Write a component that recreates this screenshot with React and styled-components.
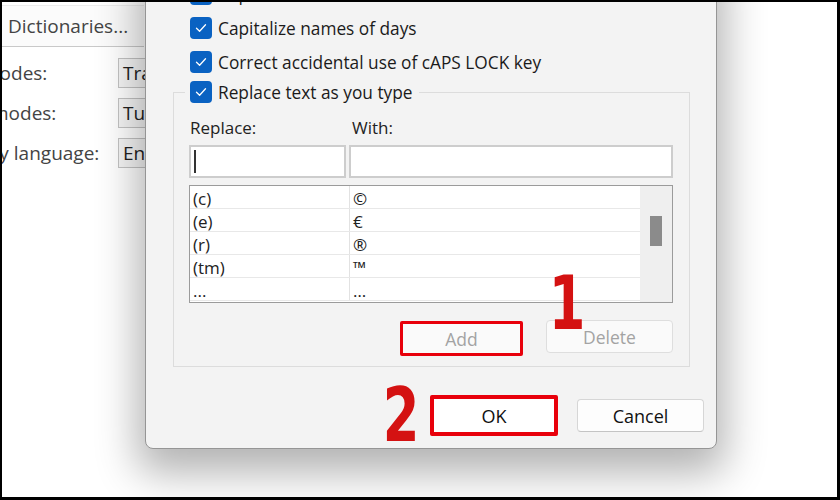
import React from 'react';
import styled, { createGlobalStyle } from 'styled-components';

const GlobalStyle = createGlobalStyle`
  html, body {
    margin: 0;
    padding: 0;
    background: #fff;
  }
  body {
    width: 840px;
    height: 500px;
    overflow: hidden;
    font-family: "Open Sans", "Noto Sans", sans-serif;
    color: #1b1b1b;
  }
  * {
    box-sizing: border-box;
  }
`;

const Screen = styled.div`
  position: relative;
  width: 840px;
  height: 500px;
  overflow: hidden;
  background: #fff;

  &::after {
    content: '';
    position: absolute;
    inset: 0;
    border-style: solid;
    border-color: #000;
    border-width: 2px 3px 3px 2px;
    pointer-events: none;
  }
`;

/* window behind the dialog */
const BackWindow = styled.div`
  padding-top: 5px;
  color: #3a3a3a;
`;

const DictButton = styled.div`
  width: 144px;
  height: 42px;
  display: flex;
  align-items: center;
  padding-left: 8px;
  background: #fbfbfb;
  border-top: 1px solid #ececec;
  border-bottom: 1px solid #c9c9c9;
  font-size: 19px;
  color: #444;
`;

const OptionRows = styled.div`
  display: flex;
  flex-direction: column;
  gap: 10px;
  margin-top: 11px;
`;

const OptionRow = styled.div`
  display: flex;
  align-items: center;
  height: 30px;
`;

const OptionLabel = styled.div`
  flex: 0 0 118px;
  white-space: nowrap;
  text-indent: ${(p) => p.$shift}px;
  font-size: 19px;
  color: #444;
`;

const SelectBox = styled.div`
  width: 70px;
  height: 30px;
  display: flex;
  align-items: center;
  padding-left: 4px;
  background: #f6f6f6;
  border: 1px solid #c4c4c4;
  font-size: 19px;
  color: #222;
  white-space: nowrap;
  overflow: hidden;
`;

/* AutoCorrect dialog */
const Dialog = styled.div`
  position: absolute;
  left: 145px;
  top: -40px;
  width: 572px;
  padding-top: 16px;
  background: #f3f3f3;
  border: 1px solid #959595;
  border-radius: 0 0 8px 8px;
  box-shadow: 0 16px 42px 8px rgba(0, 0, 0, 0.3);
`;

const CheckRow = styled.div`
  display: flex;
  align-items: center;
  gap: 6px;
  height: 34px;
  padding-left: 44px;
  font-size: 17.3px;
  white-space: nowrap;
`;

const Box = styled.span`
  flex: 0 0 22px;
  width: 22px;
  height: 22px;
  border-radius: 4px;
  background: #0a62c2;
  display: flex;
  align-items: center;
  justify-content: center;
`;

const Group = styled.fieldset`
  margin: 0 26px 0 27px;
  padding: 0 16px 10px 15px;
  border: 1px solid #dcdcdc;
  min-width: 0;
`;

const Legend = styled.legend`
  display: flex;
  align-items: center;
  gap: 6px;
  height: 26px;
  margin-left: -4px;
  padding: 0 6px 0 5px;
  font-size: 17.3px;
  white-space: nowrap;
`;

const FieldGrid = styled.div`
  display: grid;
  grid-template-columns: 157px 324px;
  column-gap: 3px;
  row-gap: 5px;
  margin-top: 11px;
`;

const FieldLabel = styled.div`
  height: 24px;
  line-height: 24px;
  padding-left: ${(p) => (p.$second ? 3 : 1)}px;
  font-size: 17px;
  color: #222;
`;

const TextBox = styled.div`
  height: 33px;
  background: #fff;
  border: 2px solid #cdcdcd;
  display: flex;
  align-items: center;
  padding-left: 3px;
`;

const Caret = styled.span`
  width: 2px;
  height: 23px;
  background: #333;
`;

const List = styled.div`
  display: flex;
  height: 118px;
  margin-top: 7px;
  border: 1px solid #9b9b9b;
  background: #fff;
  overflow: hidden;
`;

const Rows = styled.div`
  flex: 1;
`;

const Row = styled.div`
  display: grid;
  grid-template-columns: 160px 1fr;
  height: 23px;
  border-bottom: 1px solid #e8e8e8;
  font-size: 17px;
  line-height: 26px;
  overflow: hidden;
`;

const Cell = styled.div`
  padding-left: 3px;
  white-space: nowrap;
  border-right: ${(p) => (p.$first ? '1px solid #e2e2e2' : 'none')};
  color: #222;
`;

const ScrollTrack = styled.div`
  flex: 0 0 32px;
  background: #efefef;
  display: flex;
  justify-content: center;
  padding-top: 30px;
`;

const Thumb = styled.div`
  width: 12px;
  height: 30px;
  background: #8b8b8b;
`;

const ButtonRow = styled.div`
  position: relative;
  display: flex;
  justify-content: flex-end;
  align-items: flex-start;
  gap: 23px;
  margin-top: 17px;
`;

const Button = styled.div`
  display: flex;
  align-items: center;
  justify-content: center;
  width: ${(p) => (p.$marked ? 123 : 127)}px;
  height: ${(p) => (p.$marked ? 35 : 33)}px;
  margin-top: ${(p) => (p.$marked ? 1 : 0)}px;
  background: ${(p) => (p.$disabled ? '#fafafa' : '#fdfdfd')};
  border: ${(p) => (p.$marked ? '3px solid #e8000b' : '1px solid #dedede')};
  border-radius: ${(p) => (p.$marked ? 2 : 4)}px;
  font-size: 17.5px;
  color: ${(p) => (p.$disabled ? '#a3a3a3' : '#1b1b1b')};
`;

const Footer = styled.div`
  display: flex;
  justify-content: flex-end;
  align-items: center;
  padding: 28px 12px 12px 0;
`;

const OkButton = styled.div`
  width: 128px;
  height: 41px;
  display: flex;
  align-items: center;
  justify-content: center;
  background: #fff;
  border: 4px solid #e8000b;
  border-radius: 2px;
  margin-right: 19px;
  font-size: 18px;
  color: #111;
`;

const CancelButton = styled.div`
  width: 127px;
  height: 33px;
  display: flex;
  align-items: center;
  justify-content: center;
  background: #fdfdfd;
  border: 1px solid #d6d6d6;
  border-bottom-color: #c4c4c4;
  border-radius: 4px;
  font-size: 18px;
  color: #111;
`;

const StepNumber = styled.span`
  display: block;
  width: 44px;
  text-align: center;
  font-family: "DejaVu Sans Condensed", "DejaVu Sans", sans-serif;
  font-weight: bold;
  font-size: 75px;
  color: #d41212;
  transform: scaleX(0.78);
`;

const StepOne = styled(StepNumber)`
  position: absolute;
  left: 355px;
  top: -54px;
  line-height: 1;
`;

const StepTwo = styled(StepNumber)`
  height: 41px;
  line-height: 41px;
  margin-right: 8px;
`;

const Check = () => (
  <Box>
    <svg width="14" height="14" viewBox="0 0 14 14">
      <polyline points="2.5,7.2 5.6,10.2 11.5,3.8" fill="none" stroke="#fff" strokeWidth="1.3" strokeLinecap="round" strokeLinejoin="round" />
    </svg>
  </Box>
);

const entries = [
  ['(c)', '©'],
  ['(e)', '€'],
  ['(r)', '®'],
  ['(tm)', '™'],
  ['...', '…'],
];

const options = [
  { label: 'modes:', shift: -18, value: 'Traditional' },
  { label: 'modes:', shift: -9, value: 'Tutorial' },
  { label: 'lay language:', shift: -16, value: 'English' },
];

const checks = [
  'Capitalize first letter of sentences',
  'Capitalize names of days',
  'Correct accidental use of cAPS LOCK key',
];

export default function App() {
  return (
    <>
      <GlobalStyle />
      <Screen>
        <BackWindow>
          <DictButton>Dictionaries...</DictButton>
          <OptionRows>
            {options.map((o, i) => (
              <OptionRow key={i}>
                <OptionLabel $shift={o.shift}>{o.label}</OptionLabel>
                <SelectBox>{o.value}</SelectBox>
              </OptionRow>
            ))}
          </OptionRows>
        </BackWindow>

        <Dialog>
          {checks.map((c) => (
            <CheckRow key={c}>
              <Check />
              {c}
            </CheckRow>
          ))}

          <Group>
            <Legend>
              <Check />
              Replace text as you type
            </Legend>

            <FieldGrid>
              <FieldLabel>Replace:</FieldLabel>
              <FieldLabel $second>With:</FieldLabel>
              <TextBox>
                <Caret />
              </TextBox>
              <TextBox />
            </FieldGrid>

            <List>
              <Rows>
                {entries.map(([from, to]) => (
                  <Row key={from}>
                    <Cell $first>{from}</Cell>
                    <Cell>{to}</Cell>
                  </Row>
                ))}
              </Rows>
              <ScrollTrack>
                <Thumb />
              </ScrollTrack>
            </List>

            <ButtonRow>
              <Button $marked $disabled>Add</Button>
              <Button $disabled>Delete</Button>
              <StepOne>1</StepOne>
            </ButtonRow>
          </Group>

          <Footer>
            <StepTwo>2</StepTwo>
            <OkButton>OK</OkButton>
            <CancelButton>Cancel</CancelButton>
          </Footer>
        </Dialog>
      </Screen>
    </>
  );
}
